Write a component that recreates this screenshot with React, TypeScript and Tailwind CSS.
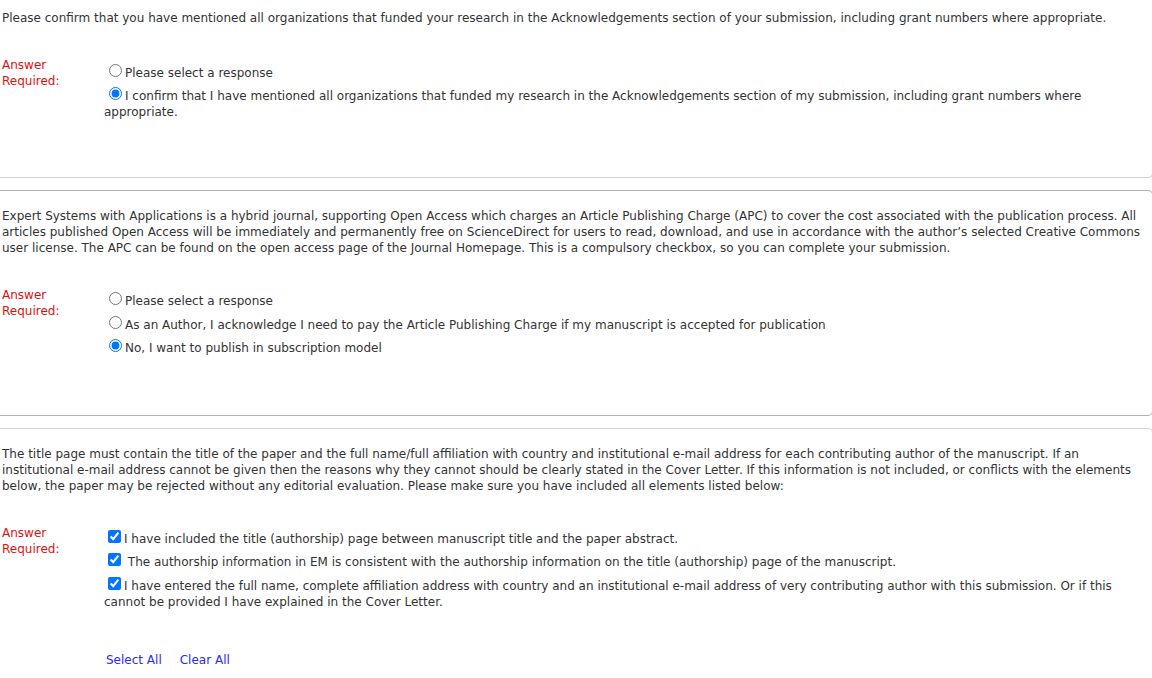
import React from "react";

const font = { fontFamily: '"DejaVu Sans", Verdana, sans-serif' };

function AnswerLabel() {
  return (
    <div className="w-[102px] shrink-0 text-[#dd1111] leading-[16px]">
      Answer
      <br />
      Required:
    </div>
  );
}

function Radio({ checked, name, tight, children }: { checked?: boolean; name: string; tight?: boolean; children: React.ReactNode }) {
  return (
    <div className={tight ? "mb-[2.5px] leading-[16px]" : "mb-[3.5px] leading-[16px]"}>
      <input type="radio" name={name} defaultChecked={checked} className="align-baseline mt-[3px] mr-[3px] mb-0 ml-[5px]" />
      {children}
    </div>
  );
}

function Check({ children }: { children: React.ReactNode }) {
  return (
    <div className="mb-[3.5px] leading-[16px]">
      <input type="checkbox" defaultChecked className="align-baseline mt-[3px] mr-[3px] mb-[3px] ml-[4px]" />
      {children}
    </div>
  );
}

export default function App() {
  return (
    <div style={font} className="bg-white text-[12px] leading-[16px] text-[#333] w-[1152px] h-[678px] overflow-hidden">
      {/* Section 1 */}
      <div className="w-[1153px] border-b border-r border-[#cfcfcf] rounded-br-[5px] pl-[2px] pr-[11px] pt-[10px] pb-[55px]">
        <p>
          Please confirm that you have mentioned all organizations that funded your research in the Acknowledgements section of your submission, including grant numbers where appropriate.
        </p>
        <div className="flex mt-[31px]">
          <AnswerLabel />
          <div className="flex-1 pt-[4px]">
            <Radio name="q1" tight>Please select a response</Radio>
            <Radio name="q1" tight checked>
              I confirm that I have mentioned all organizations that funded my research in the Acknowledgements section of my submission, including grant numbers where appropriate.
            </Radio>
          </div>
        </div>
      </div>

      {/* Section 2 */}
      <div className="mt-[12px] w-[1153px] border-t border-b border-r border-[#b0b0b0] rounded-r-[5px] pl-[2px] pr-[11px] pt-[17px] pb-[55px]">
        <p>
          Expert Systems with Applications is a hybrid journal, supporting Open Access which charges an Article Publishing Charge (APC) to cover the cost associated with the publication process. All articles published Open Access will be immediately and permanently free on ScienceDirect for users to read, download, and use in accordance with the author’s selected Creative Commons user license. The APC can be found on the open access page of the Journal Homepage. This is a compulsory checkbox, so you can complete your submission.
        </p>
        <div className="flex mt-[31px]">
          <AnswerLabel />
          <div className="flex-1 pt-[2px]">
            <Radio name="q2">Please select a response</Radio>
            <Radio name="q2">As an Author, I acknowledge I need to pay the Article Publishing Charge if my manuscript is accepted for publication</Radio>
            <Radio name="q2" checked>No, I want to publish in subscription model</Radio>
          </div>
        </div>
      </div>

      {/* Section 3 */}
      <div className="mt-[12px] w-[1153px] border-t border-r border-[#d4d4d4] rounded-tr-[5px] pl-[2px] pr-[11px] pt-[17px] pb-[20px]">
        <p>
          The title page must contain the title of the paper and the full name/full affiliation with country and institutional e-mail address for each contributing author of the manuscript. If an institutional e-mail address cannot be given then the reasons why they cannot should be clearly stated in the Cover Letter. If this information is not included, or conflicts with the elements below, the paper may be rejected without any editorial evaluation. Please make sure you have included all elements listed below:
        </p>
        <div className="flex mt-[31px]">
          <AnswerLabel />
          <div className="flex-1 pt-[2px]">
            <Check>I have included the title (authorship) page between manuscript title and the paper abstract.</Check>
            <Check>&nbsp;The authorship information in EM is consistent with the authorship information on the title (authorship) page of the manuscript.</Check>
            <Check>
              I have entered the full name, complete affiliation address with country and an institutional e-mail address of very contributing author with this submission. Or if this cannot be provided I have explained in the Cover Letter.
            </Check>
            <div className="mt-[42px] pl-[2px] flex gap-[18px] text-[#2b2bf0]">
              <a href="#" className="no-underline">Select All</a>
              <a href="#" className="no-underline">Clear All</a>
            </div>
          </div>
        </div>
      </div>
    </div>
  );
}
